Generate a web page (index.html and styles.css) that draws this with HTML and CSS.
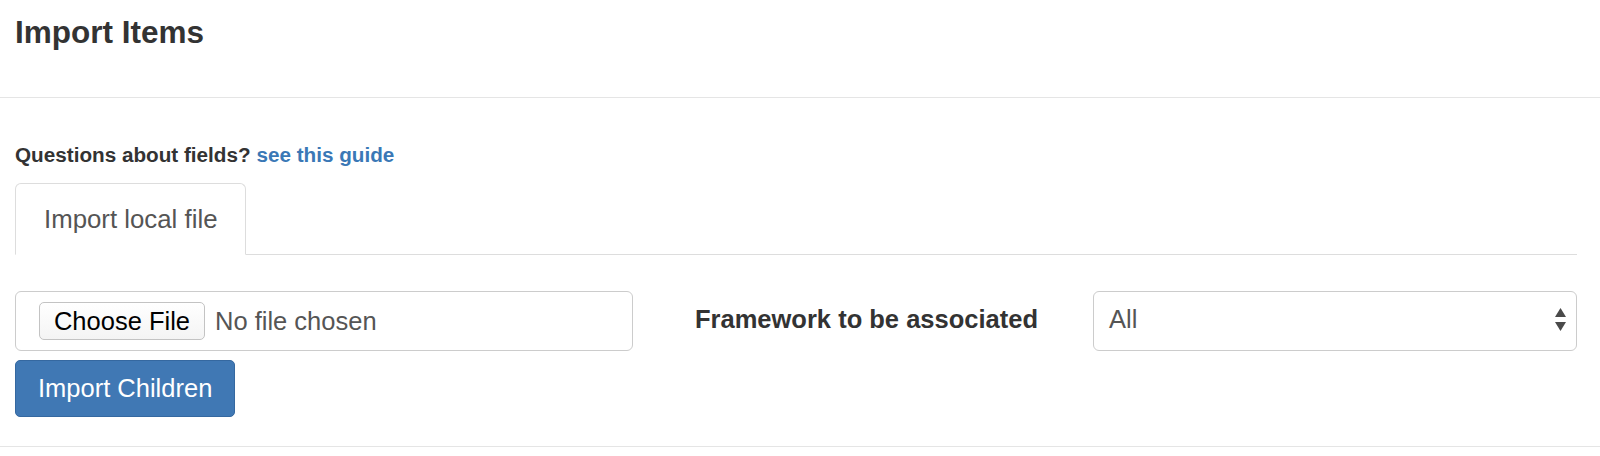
FILE: index.html
```html
<!DOCTYPE html>
<html lang="en">
<head>
<meta charset="utf-8">
<title>Import Items</title>
<link rel="stylesheet" href="styles.css">
</head>
<body>
<div class="modal">
  <header class="modal-header">
    <h3 class="modal-title">Import Items</h3>
  </header>
  <section class="modal-body">
    <p class="help">Questions about fields? <a class="link" href="#">see this guide</a></p>
    <ul class="tabs">
      <li class="tab"><a class="tab-link" href="#">Import local file</a></li>
    </ul>
    <div class="import-row">
      <div class="file-field">
        <span class="file-btn">Choose File</span>
        <span class="file-status">No file chosen</span>
      </div>
      <label class="fw-label">Framework to be associated</label>
      <div class="select">
        <span class="select-value">All</span>
        <svg class="arrows" width="11" height="23" viewBox="0 0 11 23" aria-hidden="true">
          <polygon points="5.5,0 11,9 0,9" fill="#4a4a4a"/>
          <polygon points="0,14 11,14 5.5,23" fill="#4a4a4a"/>
        </svg>
      </div>
    </div>
    <button class="btn-primary" type="button">Import Children</button>
  </section>
  <footer class="modal-footer"></footer>
</div>
</body>
</html>
```

FILE: styles.css
```css
html, body {
  margin: 0;
  padding: 0;
  background: #fff;
}

body {
  font-family: "Liberation Sans", Arial, Helvetica, sans-serif;
  color: #333;
}

.modal-header {
  box-sizing: border-box;
  height: 98px;
  padding: 15px 15px 0;
  border-bottom: 1px solid #e5e5e5;
}

.modal-title {
  margin: 0;
  font-size: 31.5px;
  line-height: 35px;
  font-weight: bold;
  color: #333;
}

.modal-body {
  padding: 42px 23px 29px 15px;
}

.help {
  margin: 0 0 14px;
  font-size: 20.7px;
  line-height: 29px;
  font-weight: bold;
  color: #333;
}

.link {
  color: #3a78b6;
  text-decoration: none;
}

.tabs {
  list-style: none;
  margin: 0;
  padding: 0;
  display: flex;
  border-bottom: 1px solid #ddd;
}

.tab {
  margin-bottom: -1px;
}

.tab-link {
  display: block;
  padding: 0 28px;
  line-height: 70px;
  font-size: 25.8px;
  color: #555;
  text-decoration: none;
  background: #fff;
  border: 1px solid #ddd;
  border-bottom-color: transparent;
  border-radius: 6px 6px 0 0;
}

.import-row {
  margin-top: 36px;
  display: grid;
  grid-template-columns: 618px 1fr 484px;
  align-items: center;
  height: 60px;
}

.file-field {
  box-sizing: border-box;
  height: 60px;
  display: flex;
  align-items: center;
  padding-left: 23px;
  border: 1px solid #ccc;
  border-radius: 6px;
  font-size: 25.5px;
}

.file-btn {
  box-sizing: border-box;
  height: 38px;
  width: 166px;
  display: flex;
  align-items: center;
  justify-content: center;
  border: 1px solid #c3c3c3;
  border-radius: 5px;
  background: linear-gradient(#ffffff, #f4f4f4);
  color: #000;
}

.file-status {
  margin-left: 10px;
  color: #555;
}

.fw-label {
  justify-self: start;
  margin-left: 62px;
  margin-top: -3px;
  font-size: 25.5px;
  font-weight: bold;
  color: #333;
}

.select {
  box-sizing: border-box;
  height: 60px;
  display: flex;
  align-items: center;
  justify-content: space-between;
  padding: 0 10px 0 15px;
  border: 1px solid #ccc;
  border-radius: 6px;
  font-size: 25.5px;
  color: #555;
}

.select-value {
  margin-top: -3px;
}

.arrows {
  display: block;
  margin-top: -3px;
}

.btn-primary {
  display: block;
  margin-top: 9px;
  height: 57px;
  padding: 0 22px;
  font-family: inherit;
  font-size: 25.5px;
  color: #fff;
  background: #4078b4;
  border: 1px solid #3568a0;
  border-radius: 5px;
  cursor: pointer;
}

.modal-footer {
  height: 9px;
  border-top: 1px solid #e5e5e5;
}
```
